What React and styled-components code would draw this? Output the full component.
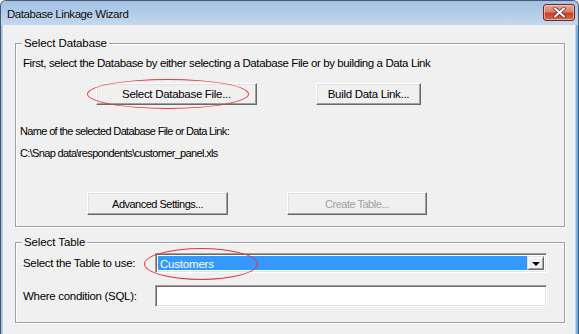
import React from "react";
import styled, { createGlobalStyle } from "styled-components";

const Global = createGlobalStyle`
  html, body { margin: 0; padding: 0; background: #f0f0f0; }
  body { width: 579px; height: 334px; overflow: hidden; }
  * { box-sizing: border-box; }
`;

const Window = styled.div`
  width: 579px;
  height: 334px;
  border: 1px solid #4a5a6e;
  border-bottom: none;
  border-radius: 6px 6px 0 0;
  background: #bcd3ec;
  box-shadow: inset -2px 0 0 #6fb2ec, inset 1px 0 0 #9dbbe0;
  display: flex;
  flex-direction: column;
  overflow: hidden;
  font-family: "Liberation Sans", Arial, sans-serif;
  font-size: 11px;
  color: #000;
`;

const TitleBar = styled.div`
  height: 24px;
  flex: none;
  display: flex;
  align-items: center;
  justify-content: space-between;
  padding: 0 3px 0 6px;
  background: linear-gradient(#a3bfe2, #c3d8ef);
`;

const Title = styled.span`
  font-family: "Liberation Sans", Arial, sans-serif;
  font-size: 11.5px;
  color: #111;
  letter-spacing: -0.45px;
  margin-top: 2px;
`;

const CloseButton = styled.div`
  width: 32px;
  height: 17px;
  margin-top: -1px;
  border: 1px solid #6b2a26;
  border-radius: 3px;
  background: linear-gradient(#eaa496 0%, #dc7f6c 45%, #c8412b 55%, #d46a52 100%);
  box-shadow: inset 0 0 0 1px rgba(255, 220, 210, 0.55);
  display: flex;
  align-items: center;
  justify-content: center;
`;

const Client = styled.div`
  flex: 1;
  margin: 0 3px 0 2px;
  background: #f0f0f0;
  padding: 11px 10px 0 12px;
  display: flex;
  flex-direction: column;
  gap: 8px;
`;

const Group = styled.fieldset`
  margin: 0;
  padding: 0 ${(p) => p.$padRight}px ${(p) => p.$padBottom}px ${(p) => p.$padLeft}px;
  border: 1px solid #a0a0a0;
  box-shadow: 1px 1px 0 #fff, inset 1px 1px 0 #fff;
  min-width: 0;
`;

const Legend = styled.legend`
  padding: 0 2px;
  margin-left: -1px;
  line-height: 14px;
  background: #f0f0f0;
  font-size: 11.5px;
  letter-spacing: -0.1px;
`;

const Text = styled.div`
  line-height: 14px;
  margin-top: ${(p) => p.$top || 0}px;
  margin-left: ${(p) => (p.$narrow ? "-3px" : "0")};
  font-size: ${(p) => (p.$narrow ? "11px" : "11.5px")};
  letter-spacing: ${(p) => (p.$narrow ? "-0.65px" : "-0.4px")};
  white-space: nowrap;
`;

const ButtonRow = styled.div`
  display: flex;
  gap: 59px;
  margin-top: ${(p) => p.$top}px;
  padding-left: ${(p) => p.$left}px;
`;

const Anchor = styled.div`
  position: relative;
  display: flex;
  flex: ${(p) => (p.$grow ? 1 : "none")};
`;

const RedEllipse = styled.span`
  position: absolute;
  left: ${(p) => p.$x}px;
  top: ${(p) => p.$y}px;
  width: ${(p) => p.$w}px;
  height: ${(p) => p.$h}px;
  border: 1.5px solid #e8343a;
  border-radius: 50%;
  pointer-events: none;
`;

const Button = styled.button`
  width: ${(p) => p.$w}px;
  height: ${(p) => p.$h}px;
  padding: 0;
  margin: 0;
  font-family: "Liberation Sans", Arial, sans-serif;
  font-size: ${(p) => (p.$narrow ? "11px" : "11.5px")};
  letter-spacing: ${(p) => (p.$narrow ? "-0.5px" : "-0.3px")};
  color: ${(p) => (p.disabled ? "#a0a0a0" : "#000")};
  background: #f0f0f0;
  border: 1px solid;
  border-color: #fff #696969 #696969 #fff;
  box-shadow: inset -1px -1px 0 #a0a0a0, inset 1px 1px 0 #e3e3e3;
  cursor: default;
`;

const FormGrid = styled.div`
  display: grid;
  grid-template-columns: 132px 1fr;
  row-gap: 12px;
  align-items: center;
  padding-top: 4px;
`;

const Label = styled.div`
  font-size: 11.5px;
  letter-spacing: -0.3px;
  line-height: 14px;
  white-space: nowrap;
`;

const Sunken = styled.div`
  height: ${(p) => p.$h}px;
  width: 100%;
  border: 1px solid;
  border-color: #a0a0a0 #fff #fff #a0a0a0;
  background: #fff;
  display: flex;
  box-shadow: inset 1px 1px 0 #696969, inset -1px -1px 0 #e3e3e3;
  padding: 2px;
`;

const Selected = styled.div`
  flex: 1;
  background: #3399ff;
  color: #fff;
  line-height: 16px;
  padding-left: 2px;
  font-size: 11.5px;
  letter-spacing: -0.2px;
`;

const DropButton = styled.div`
  width: 17px;
  flex: none;
  background: #f0f0f0;
  border: 1px solid;
  border-color: #e3e3e3 #696969 #696969 #e3e3e3;
  box-shadow: inset 1px 1px 0 #fff, inset -1px -1px 0 #a0a0a0;
  display: flex;
  align-items: center;
  justify-content: center;
`;

const Triangle = styled.span`
  width: 0;
  height: 0;
  border-left: 4px solid transparent;
  border-right: 4px solid transparent;
  border-top: 4px solid #000;
  margin-top: 1px;
`;

export default function App() {
  return (
    <>
      <Global />
      <Window>
        <TitleBar>
          <Title>Database Linkage Wizard</Title>
          <CloseButton>
            <svg width="13" height="11" viewBox="0 0 13 11">
              <path
                d="M2 1.5 L11 9.5 M11 1.5 L2 9.5"
                stroke="#5a2018"
                strokeWidth="3.6"
                strokeLinecap="round"
              />
              <path
                d="M2 1.5 L11 9.5 M11 1.5 L2 9.5"
                stroke="#fff"
                strokeWidth="2.2"
                strokeLinecap="round"
              />
            </svg>
          </CloseButton>
        </TitleBar>
        <Client>
          <Group $padLeft={7} $padRight={8} $padBottom={11}>
            <Legend>Select Database</Legend>
            <Text $top={6}>
              First, select the Database by either selecting a Database File or by building a Data Link
            </Text>
            <ButtonRow $top={13} $left={73}>
              <Anchor>
                <Button $w={161} $h={22}>Select Database File...</Button>
                <RedEllipse $x={-9} $y={-4} $w={162} $h={30} />
              </Anchor>
              <Button $w={105} $h={22}>Build Data Link...</Button>
            </ButtonRow>
            <Text $top={19} $narrow>Name of the selected Database File or Data Link:</Text>
            <Text $top={8} $narrow>C:\Snap data\respondents\customer_panel.xls</Text>
            <ButtonRow $top={32} $left={64}>
              <Button $w={141} $h={23} $narrow>Advanced Settings...</Button>
              <Button $w={140} $h={23} $narrow disabled>Create Table...</Button>
            </ButtonRow>
          </Group>
          <Group $padLeft={7} $padRight={17} $padBottom={15}>
            <Legend>Select Table</Legend>
            <FormGrid>
              <Label>Select the Table to use:</Label>
              <Anchor $grow>
                <Sunken $h={20}>
                  <Selected>Customers</Selected>
                  <DropButton>
                    <Triangle />
                  </DropButton>
                </Sunken>
                <RedEllipse $x={-11} $y={-5} $w={114} $h={32} />
              </Anchor>
              <Label>Where condition (SQL):</Label>
              <Sunken $h={22} />
            </FormGrid>
          </Group>
        </Client>
      </Window>
    </>
  );
}
